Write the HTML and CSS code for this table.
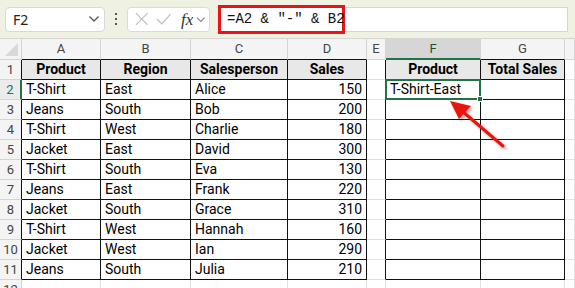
FILE: index.html
```html
<!DOCTYPE html>
<html>
<head>
<meta charset="utf-8">
<link rel="stylesheet" href="styles.css">
</head>
<body>
<div class="app">
  <div class="topbar">
    <div class="namebox">
      <span class="nb-text">F2</span>
      <svg class="chev" width="12" height="8" viewBox="0 0 12 8"><polyline points="1.5,1.5 6,6 10.5,1.5" fill="none" stroke="#555" stroke-width="1.3"/></svg>
    </div>
    <div class="dots"><i></i><i></i><i></i></div>
    <div class="fbtns">
      <svg width="14" height="14" viewBox="0 0 14 14"><path d="M1 1 L13 13 M13 1 L1 13" stroke="#bdbdbd" stroke-width="1.2" fill="none"/></svg>
      <svg width="16" height="14" viewBox="0 0 16 14"><polyline points="1,7 6,12 15,2" stroke="#bdbdbd" stroke-width="1.2" fill="none"/></svg>
      <span class="fx">fx</span>
      <svg class="chev2" width="10" height="7" viewBox="0 0 10 7"><polyline points="1,1.5 5,5.5 9,1.5" fill="none" stroke="#888" stroke-width="1.2"/></svg>
    </div>
    <div class="fbar">
      <div class="formula">=A2 &amp; "-" &amp; B2</div>
    </div>
  </div>
  <div class="sheet">
    <div class="corner"><span class="tri"></span></div>
    <div class="ch tb">A</div><div class="ch tb">B</div><div class="ch tb">C</div><div class="ch tb">D</div><div class="ch">E</div><div class="ch sel">F</div><div class="ch tb">G</div><div class="ch"></div>

    <div class="rh tb">1</div>
    <div class="c t hd">Product</div><div class="c t hd">Region</div><div class="c t hd">Salesperson</div><div class="c t hd">Sales</div><div class="c e"></div><div class="c t hd">Product</div><div class="c t hd">Total Sales</div><div class="c"></div>

    <div class="rh tb rsel">2</div>
    <div class="c t">T-Shirt</div><div class="c t">East</div><div class="c t">Alice</div><div class="c t n">150</div><div class="c e"></div><div class="c t active">T-Shirt-East<span class="selbox"><span class="handle"></span></span></div><div class="c t"></div><div class="c"></div>

    <div class="rh tb">3</div>
    <div class="c t">Jeans</div><div class="c t">South</div><div class="c t">Bob</div><div class="c t n">200</div><div class="c e"></div><div class="c t"></div><div class="c t"></div><div class="c"></div>

    <div class="rh tb">4</div>
    <div class="c t">T-Shirt</div><div class="c t">West</div><div class="c t">Charlie</div><div class="c t n">180</div><div class="c e"></div><div class="c t"></div><div class="c t"></div><div class="c"></div>

    <div class="rh tb">5</div>
    <div class="c t">Jacket</div><div class="c t">East</div><div class="c t">David</div><div class="c t n">300</div><div class="c e"></div><div class="c t"></div><div class="c t"></div><div class="c"></div>

    <div class="rh tb">6</div>
    <div class="c t">T-Shirt</div><div class="c t">South</div><div class="c t">Eva</div><div class="c t n">130</div><div class="c e"></div><div class="c t"></div><div class="c t"></div><div class="c"></div>

    <div class="rh tb">7</div>
    <div class="c t">Jeans</div><div class="c t">East</div><div class="c t">Frank</div><div class="c t n">220</div><div class="c e"></div><div class="c t"></div><div class="c t"></div><div class="c"></div>

    <div class="rh tb">8</div>
    <div class="c t">Jacket</div><div class="c t">South</div><div class="c t">Grace</div><div class="c t n">310</div><div class="c e"></div><div class="c t"></div><div class="c t"></div><div class="c"></div>

    <div class="rh tb">9</div>
    <div class="c t">T-Shirt</div><div class="c t">West</div><div class="c t">Hannah</div><div class="c t n">160</div><div class="c e"></div><div class="c t"></div><div class="c t"></div><div class="c"></div>

    <div class="rh tb">10</div>
    <div class="c t">Jacket</div><div class="c t">West</div><div class="c t">Ian</div><div class="c t n">290</div><div class="c e"></div><div class="c t"></div><div class="c t"></div><div class="c"></div>

    <div class="rh tb">11</div>
    <div class="c t">Jeans</div><div class="c t">South</div><div class="c t">Julia</div><div class="c t n">210</div><div class="c e"></div><div class="c t"></div><div class="c t"></div><div class="c"></div>

    <div class="rh">12</div>
    <div class="c"></div><div class="c"></div><div class="c"></div><div class="c"></div><div class="c"></div><div class="c"></div><div class="c"></div><div class="c"></div>
  </div>
  <svg class="arrow" width="575" height="288" viewBox="0 0 575 288">
    <defs>
      <filter id="sh" x="-20%" y="-20%" width="140%" height="140%">
        <feDropShadow dx="2" dy="2" stdDeviation="1.5" flood-color="#000" flood-opacity="0.35"/>
      </filter>
    </defs>
    <g filter="url(#sh)">
      <line x1="503" y1="146" x2="462" y2="111" stroke="#e8140e" stroke-width="3" stroke-linecap="round"/>
      <polygon points="450,101 471,106 459,119" fill="#e8140e"/>
    </g>
  </svg>
</div>
</body>
</html>
```
FILE: styles.css
```css
* { box-sizing: border-box; }
html, body { margin: 0; padding: 0; }
body { width: 575px; height: 288px; overflow: hidden; background: #fff; }
.app { position: relative; width: 575px; height: 288px; overflow: hidden; }

.topbar {
  height: 39px;
  background: #eff1e3;
  border-bottom: 1px solid #d6d6d0;
  display: flex;
  align-items: center;
  padding: 0 7px 0 5px;
}
.namebox {
  width: 100px; height: 25px;
  background: #fff;
  border: 1px solid #d8d8d8;
  border-radius: 4px;
  display: flex; align-items: center; justify-content: space-between;
  padding: 0 4px 0 7px;
}
.nb-text { font-family: "Noto Sans", sans-serif; font-size: 14px; color: #222; }
.dots { width: 22px; display: flex; flex-direction: column; align-items: center; gap: 3px; }
.dots i { display: block; width: 2px; height: 2px; background: #555; }
.fbtns {
  width: 83px; height: 25px;
  background: #fff;
  border: 1px solid #dadada;
  border-radius: 4px;
  display: flex; align-items: center;
  padding: 0 3px 0 7px;
  gap: 7px;
}
.fx { font-family: "Liberation Serif", serif; font-style: italic; font-size: 17px; color: #333; margin-left: 3px; line-height: 1; }
.chev2 { margin-left: -4px; }
.fbar {
  flex: 1;
  margin-left: 8px;
  height: 25px;
  background: #fff;
  border: 1px solid #d5d5d5;
  display: flex; align-items: center;
}
.formula {
  height: 29px;
  margin-left: -1px;
  width: 127px;
  border: 3px solid #e8141a;
  display: flex; align-items: center;
  padding-left: 6px;
  font-family: "Liberation Mono", monospace;
  font-size: 14px;
  color: #111;
  white-space: pre;
  background: #fff;
}

.sheet {
  display: grid;
  grid-template-columns: 22px 79px 90px 97px 79px 19px 95px 84px 10px;
  grid-template-rows: 21px repeat(12, 20px);
  font-family: Roboto, sans-serif;
  font-size: 14px;
  color: #000;
}
.corner { background: #f4f4f4; border-right: 1px solid #d4d4d4; border-bottom: 1px solid #d4d4d4; position: relative; }
.tri {
  position: absolute; right: 3px; bottom: 3px;
  width: 0; height: 0;
  border-left: 13px solid transparent;
  border-bottom: 13px solid #d9d9d9;
}
.ch {
  background: #f4f4f4;
  border-right: 1px solid #d4d4d4;
  border-bottom: 1px solid #d4d4d4;
  text-align: center;
  font-size: 13px;
  color: #444;
  line-height: 20px;
}
.ch.tb { border-bottom-color: #111; }
.ch.sel { background: #d6d6d6; border-bottom: 2px solid #217346; color: #1f4e33; }
.rh {
  background: #f4f4f4;
  border-right: 1px solid #d4d4d4;
  border-bottom: 1px solid #d4d4d4;
  text-align: center;
  font-size: 13px;
  color: #444;
  line-height: 19px;
}
.rh.tb { border-right-color: #111; }
.rh.rsel { border-right: 2px solid #217346; color: #217346; background: #ececec; }
.c {
  border-right: 1px solid #e1e1e1;
  border-bottom: 1px solid #e1e1e1;
  padding: 0 4px;
  line-height: 19px;
  white-space: nowrap;
}
.c.t { border-right-color: #111; border-bottom-color: #111; }
.c.e { border-right-color: #111; }
.c.hd { background: #e8e8e8; font-weight: bold; text-align: center; }
.c.n { text-align: right; }
.active { position: relative; }
.selbox {
  position: absolute; left: -1px; top: -1px; right: -1px; bottom: -1px;
  border: 2px solid #217346;
}
.handle {
  position: absolute; right: -4px; bottom: -4px;
  width: 6px; height: 6px;
  background: #217346;
  border: 1px solid #fff;
}
.arrow { position: absolute; left: 0; top: 0; pointer-events: none; }
```
